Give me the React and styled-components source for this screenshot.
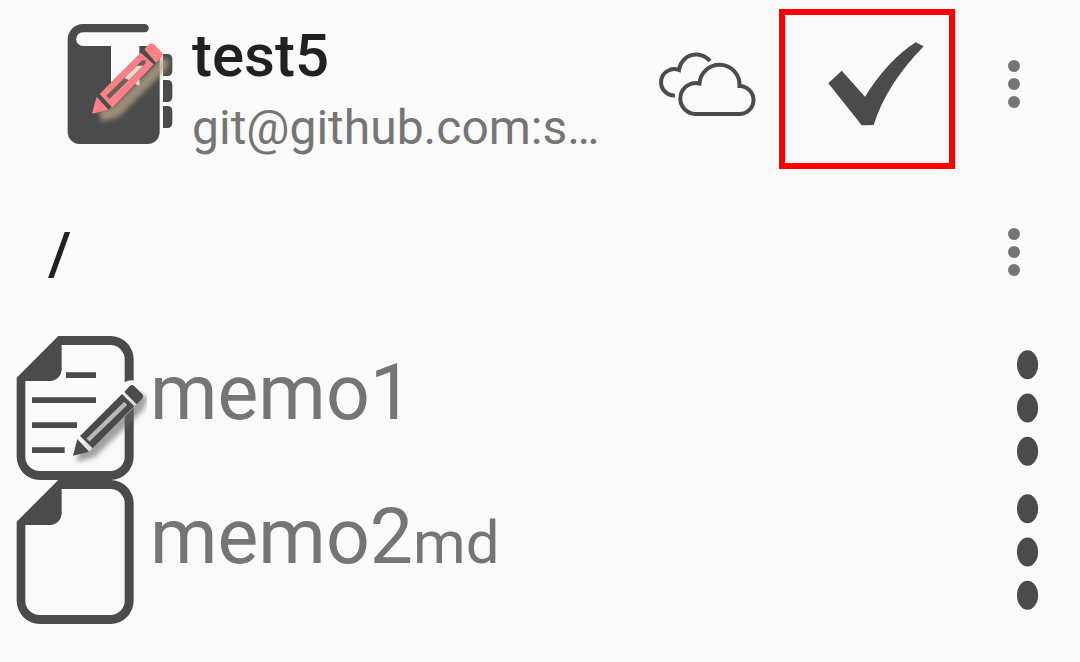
import React from 'react';
import styled, { createGlobalStyle } from 'styled-components';

const ink = '#4b4b4b';
const paper = '#fafafa';

const GlobalStyle = createGlobalStyle`
  * { box-sizing: border-box; }
  body {
    margin: 0;
    background: ${paper};
    font-family: Roboto, 'Noto Sans', sans-serif;
  }
`;

const Screen = styled.main`
  display: flex;
  flex-direction: column;
`;

const Bar = styled.header`
  display: flex;
  align-items: center;
  min-height: 168px;
  padding-left: ${(p) => p.$inset}px;
`;

const Titles = styled.div`
  display: flex;
  flex: 1;
  flex-direction: column;
  gap: 6px;
  min-width: 0;
  padding: 10px 0 0 6px;
  white-space: nowrap;
`;

const Title = styled.h1`
  margin: 0;
  color: #212121;
  font-size: 60px;
  font-weight: 500;
  line-height: 72px;
`;

const FolderPath = styled(Title)`
  flex: 1;
  padding-top: 4px;
`;

const Subtitle = styled.p`
  margin: 0;
  overflow: hidden;
  color: #757575;
  font-size: 48px;
  line-height: 60px;
`;

const IconButton = styled.button`
  position: relative;
  display: flex;
  flex: none;
  align-items: center;
  justify-content: center;
  align-self: stretch;
  width: ${(p) => p.$width}px;
  padding: 0;
  border: 0;
  background: none;
  cursor: pointer;
`;

const Highlight = styled.span`
  position: absolute;
  top: 9px;
  left: -13px;
  width: 176px;
  height: 160px;
  border: 6px solid #ff0000;
  pointer-events: none;
`;

const FileList = styled.ul`
  margin: 0;
  padding: 0;
  list-style: none;
`;

const FileRow = styled.li`
  display: flex;
  height: 144px;
`;

const FileName = styled.span`
  flex: 1;
  min-width: 0;
  padding: 11px 0 0 3px;
  color: #757575;
  font-size: 77px;
  line-height: 92px;
  white-space: nowrap;
`;

const Extension = styled.span`
  font-size: 60px;
`;

const Drawing = styled.svg`
  display: block;
  flex: none;
`;

function BookIcon() {
  return (
    <Drawing width="132" height="148" viewBox="-3 0 396 444" aria-hidden="true">
      <defs>
        <filter id="glow" x="-30%" y="-30%" width="160%" height="160%">
          <feGaussianBlur stdDeviation="8" />
        </filter>
      </defs>
      <path
        fill={ink}
        d="M84 42H269a12.500 12.500 0 0 1 0 25H84a20 20 0 0 0 0 41H168V228L210 200L253 228V108H276L314 146V366a36 36 0 0 1-36 36H74a36 36 0 0 1-36-36V90a46 46 0 0 1 46-48Z"
      />
      <path fill={ink} d="M324 132H338a14 14 0 0 1 14 14V184a14 14 0 0 1-14 14H324ZM324 210H338a14 14 0 0 1 14 14V262a14 14 0 0 1-14 14H324ZM324 288H338a14 14 0 0 1 14 14V340a14 14 0 0 1-14 14H324Z" />
      <path d="M136 318L182 306L320 168L326 146" fill="none" stroke="#b8a488" strokeOpacity=".75" strokeWidth="34" filter="url(#glow)" />
      <path d="M125 260L268 118L303 158L160 299Z" fill={ink} />
      <path d="M154 257L163 267L272 160V151H262Z" fill="#6a635c" />
      <path d="M208 204L246 167H265L222 210Z" fill="#e6dccb" />
      <path d="M240 222L253 209V226Z" fill="#e6dccb" />
      <g fill="#ff8086">
        <path d="M111 311L125 260L160 299Z" />
        <path fillRule="evenodd" d="M134 252L257 128L296 163L172 293ZM154 257L163 267L272 160V151H262Z" />
        <path d="M268 118L282 103Q289 96 297 103L319 125Q327 132 320 140L303 158Z" />
      </g>
    </Drawing>
  );
}

function CloudsIcon() {
  return (
    <Drawing width="120" height="90" viewBox="-2 -1 120 90" fill="none" stroke={ink} strokeWidth="4" aria-hidden="true">
      <path d="M60 21A17.500 17.500 0 0 0 29 30A13.200 13.200 0 1 0 25 55.500" />
      <path d="M44.500 74H89.500A14 14 0 0 0 89.500 46A20 20 0 0 0 49.500 43.500A15.500 15.500 0 1 0 44.500 74Z" />
    </Drawing>
  );
}

function CheckIcon() {
  return (
    <Drawing width="108" height="96" viewBox="0 0 108 96" fill={ink} aria-hidden="true">
      <path d="M12.300 47.300L25.700 34.700L49 60.700Q72 24 99.700 6.300L107.700 10.300Q70 49 57.700 89L45.700 89.300Z" />
    </Drawing>
  );
}

function MoreIcon() {
  return (
    <Drawing width="12" height="48" viewBox="0 0 12 48" fill="#757575" aria-hidden="true">
      <circle cx="6" cy="6" r="6" />
      <circle cx="6" cy="24" r="6" />
      <circle cx="6" cy="42" r="6" />
    </Drawing>
  );
}

function FileMoreIcon() {
  return (
    <Drawing width="22" height="116" viewBox="0 0 22 116" fill={ink} aria-hidden="true">
      <ellipse cx="10.500" cy="14.700" rx="10.600" ry="14.500" />
      <ellipse cx="10.500" cy="58" rx="10.600" ry="14.500" />
      <ellipse cx="10.500" cy="101.300" rx="10.600" ry="14.500" />
    </Drawing>
  );
}

function PageIcon({ edited }) {
  return (
    <Drawing width="147" height="144" viewBox="0 0 441 432" aria-hidden="true">
      <path
        fill={ink}
        fillRule="evenodd"
        d="M175 0H331a70 70 0 0 1 70 70V362a70 70 0 0 1-70 70H120a70 70 0 0 1-70-70V125ZM185 27V99a36 36 0 0 1-36 36H76V362a43 43 0 0 0 43 43H331a43 43 0 0 0 43-43V70a43 43 0 0 0-43-43Z"
      />
      {edited && (
        <>
          <defs>
            <filter id="shade" x="-30%" y="-30%" width="160%" height="160%">
              <feGaussianBlur stdDeviation="8" />
            </filter>
            <linearGradient id="gap" x1="0" y1="0" x2="1" y2="1">
              <stop offset=".4" stopColor={paper} />
              <stop offset=".7" stopColor="#c4c4c4" />
            </linearGradient>
          </defs>
          <path fill={ink} d="M198 109H288V126H198ZM96 184H288V201H96ZM96 259H231V276H96ZM96 334H194V351H96Z" />
          <path fill={paper} d="M232 300L374 139Q388 130 404 134L428 158L403 214L267 347Z" />
          <path d="M230 377L284 364L430 222L444 188L420 170L240 330Z" fill="#666" fillOpacity=".6" filter="url(#shade)" />
          <path fill="url(#gap)" d="M232 309L373 160L410 205L267 347Z" />
          <g fill={ink}>
            <path d="M219 359L232 309L267 347Z" />
            <path d="M240 300L366 174L403 211L278 337Z" />
            <path d="M373 168L387 152Q395 143 403 151L426 173Q433 181 426 188L410 205Z" />
          </g>
          <path d="M264 312L377 202" stroke="#b8b8b8" strokeWidth="13" />
        </>
      )}
    </Drawing>
  );
}

const files = [
  { name: 'memo1', extension: '', edited: true },
  { name: 'memo2', extension: 'md', edited: false },
];

export default function App() {
  return (
    <Screen>
      <GlobalStyle />
      <Bar $inset={54}>
        <BookIcon />
        <Titles>
          <Title>test5</Title>
          <Subtitle>git@github.com:s…</Subtitle>
        </Titles>
        <IconButton type="button" aria-label="Sync" $width={168}>
          <CloudsIcon />
        </IconButton>
        <IconButton type="button" aria-label="Commit" $width={156}>
          <CheckIcon />
          <Highlight />
        </IconButton>
        <IconButton type="button" aria-label="Repository menu" $width={132}>
          <MoreIcon />
        </IconButton>
      </Bar>
      <Bar as="section" $inset={48}>
        <FolderPath as="h2">/</FolderPath>
        <IconButton type="button" aria-label="Folder menu" $width={132}>
          <MoreIcon />
        </IconButton>
      </Bar>
      <FileList>
        {files.map((file) => (
          <FileRow key={file.name}>
            <PageIcon edited={file.edited} />
            <FileName>
              {file.name}
              {file.extension && <Extension>{file.extension}</Extension>}
            </FileName>
            <IconButton type="button" aria-label={`${file.name} menu`} $width={104}>
              <FileMoreIcon />
            </IconButton>
          </FileRow>
        ))}
      </FileList>
    </Screen>
  );
}
